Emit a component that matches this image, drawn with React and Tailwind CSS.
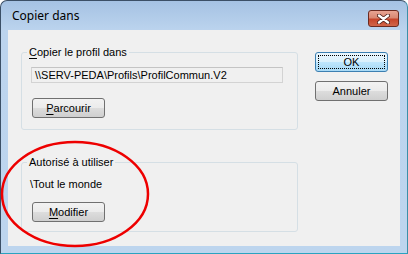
import React from 'react';

const btnBase =
  'h-[20px] w-[73px] rounded-[3px] border border-[#707070] text-[11px] leading-[14px] text-black flex items-center justify-center bg-[linear-gradient(to_bottom,#f2f2f2_0%,#ebebeb_50%,#dddddd_50%,#cfcfcf_100%)]';

const Button = ({ children, isDefault }) => {
  if (isDefault) {
    return (
      <div className="h-[20px] w-[73px] rounded-[3px] border border-[#3c7fb1] p-[2px] bg-[linear-gradient(to_bottom,#eaf6fd_0%,#d9f0fc_50%,#bee6fd_50%,#a7d9f5_100%)]">
        <div className="h-full w-full border border-dotted border-black flex items-center justify-center text-[11px] leading-[12px] text-black">
          {children}
        </div>
      </div>
    );
  }
  return <div className={btnBase}>{children}</div>;
};

const Key = ({ children }) => (
  <span className="underline underline-offset-[2px] decoration-1">{children}</span>
);

const GroupBox = ({ legend, children }) => (
  <fieldset className="border border-[#d5dfe5] rounded-[3px] w-[277px]">
    <legend className="ml-[5px] px-[2px] text-[11px] leading-[14px] text-black">{legend}</legend>
    {children}
  </fieldset>
);

export default function App() {
  return (
    <div
      className="relative w-[408px] h-[254px] overflow-hidden bg-white"
      style={{ fontFamily: '"Liberation Sans", Arial, sans-serif' }}
    >
      <div className="flex flex-col w-full h-full rounded-t-[7px] border border-[#3b4f66] border-b-[#2aa3c0] border-r-[#3c8fa8] bg-[linear-gradient(to_bottom,#a5c2e3_0px,#bcd4ee_30px,#bdd5ee_100%)]">
        {/* Title bar */}
        <div className="h-[29px] flex items-start justify-between pl-[11px] pr-[8px]">
          <span
            className="mt-[7px] text-[12px] leading-[16px] text-black"
            style={{ fontFamily: '"Noto Sans", "Open Sans", sans-serif' }}
          >
            Copier dans
          </span>
          <div className="mt-[9px] w-[31px] h-[17px] rounded-[3px] border border-[#6b2a20] flex items-center justify-center bg-[linear-gradient(to_bottom,#e8a493_0%,#d98873_45%,#c7452b_55%,#d0664a_100%)]">
            <svg width="13" height="10" viewBox="0 0 13 10">
              <path d="M2 1.5 L11 8.5 M11 1.5 L2 8.5" stroke="#4a1d16" strokeWidth="4" strokeLinecap="round" />
              <path d="M2 1.5 L11 8.5 M11 1.5 L2 8.5" stroke="#ffffff" strokeWidth="2.4" strokeLinecap="round" />
            </svg>
          </div>
        </div>

        {/* Client area */}
        <div className="flex-1 mx-[7px] mb-[7px] bg-[#f0f0f0] flex">
          <div className="pl-[13px] pt-[15px] flex flex-col gap-[25px]">
            <GroupBox legend={<><Key>C</Key>opier le profil dans</>}>
              <div className="pl-[9px] pt-[8px] pb-[11px] flex flex-col">
                <div className="w-[252px] h-[16px] border border-[#d3d3d3] border-t-[#c4c4c4] bg-[#f0f0f0] pl-[3px] text-[11px] leading-[14px] text-black">
                  {'\\\\SERV-PEDA\\Profils\\ProfilCommun.V2'}
                </div>
                <div className="mt-[15px] ml-[1px]">
                  <div className={btnBase}>
                    <span><Key>P</Key>arcourir</span>
                  </div>
                </div>
              </div>
            </GroupBox>

            <GroupBox legend="Autorisé à utiliser">
              <div className="pl-[10px] pt-[8px] pb-[9px] flex flex-col">
                <div className="text-[11px] leading-[14px] text-black ml-[-2px]">{'\\Tout le monde'}</div>
                <div className="mt-[11px]">
                  <div className={btnBase}>
                    <span><Key>M</Key>odifier</span>
                  </div>
                </div>
              </div>
            </GroupBox>
          </div>

          <div className="ml-[17px] pt-[22px] flex flex-col gap-[9px]">
            <Button isDefault>OK</Button>
            <Button>Annuler</Button>
          </div>
        </div>
      </div>

      {/* Red annotation ellipse */}
      <svg className="absolute left-0 top-[140px]" width="152" height="110" viewBox="0 0 152 110">
        <ellipse cx="75" cy="54" rx="73" ry="52" fill="none" stroke="#ee0000" strokeWidth="2.5" />
      </svg>
    </div>
  );
}
